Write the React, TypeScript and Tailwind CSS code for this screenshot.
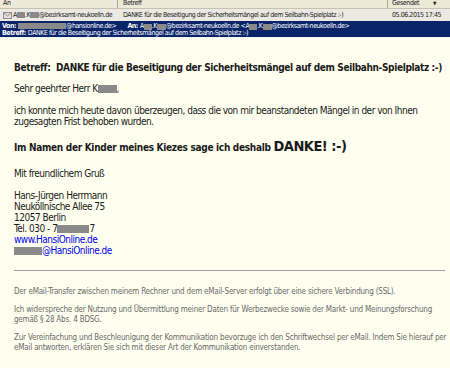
const font = "font-['Tahoma','DejaVu_Sans_Condensed','DejaVu_Sans',sans-serif]";

function Redact({ w, h = 8 }: { w: number; h?: number }) {
  return <span className="inline-block bg-[#8a8a8a] align-[-1px]" style={{ width: w, height: h }} />;
}

function Envelope() {
  return (
    <svg width="9" height="7" viewBox="0 0 9 7" className="shrink-0">
      <rect x="0.5" y="0.5" width="8" height="6" fill="#e4e2da" stroke="#8c8c8c" />
      <path d="M0.5 0.5 L4.5 4 L8.5 0.5" fill="none" stroke="#8c8c8c" />
    </svg>
  );
}

export default function App() {
  return (
    <div className={`${font} w-[450px] h-[368px] bg-[#ffffef] overflow-hidden flex flex-col`}>
      {/* column headers */}
      <div className="h-[9px] shrink-0 flex bg-[#ece9d8] border-b border-[#c5c2b2] text-[7px] leading-[7px] text-[#222] overflow-hidden tracking-[-0.4px] whitespace-nowrap">
        <div className="w-[118px] pl-[3px] border-r border-[#aca899]">An</div>
        <div className="w-[270px] pl-[5px] border-r border-[#aca899]">Betreff</div>
        <div className="flex-1 pl-[4px] flex justify-between pr-[14px]">
          <span>Gesendet</span>
          <span className="text-[5px]">▼</span>
        </div>
      </div>
      {/* message row */}
      <div className="h-[12px] shrink-0 flex items-center bg-[#ebe9e2] text-[7px] leading-[8px] text-[#222] tracking-[-0.45px] whitespace-nowrap">
        <div className="w-[118px] flex items-center pl-[3px] overflow-hidden">
          <Envelope />
          <span className="ml-[1px]">A</span><Redact w={8} h={6} /><span>.K</span><Redact w={9} h={6} /><span>@bezirksamt-neukoelln.de</span>
        </div>
        <div className="w-[270px] pl-[5px] overflow-hidden">DANKE für die Beseitigung der Sicherheitsmängel auf dem Seilbahn-Spielplatz :-)</div>
        <div className="flex-1 pl-[4px]">05.06.2015 17:45</div>
      </div>
      {/* preview header */}
      <div className="h-[16px] shrink-0 bg-[#0a246a] text-white text-[7px] leading-[7px] tracking-[-0.45px] whitespace-nowrap px-[2px] pt-[2px] flex flex-col">
        <div className="flex items-center h-[7px]">
          <b>Von:</b>
          <span className="ml-[2px]"><Redact w={48} h={6} /></span>
          <span>@hansionline.de&gt;</span>
          <b className="ml-[11px]">An:</b>
          <span className="ml-[2px]">A</span><Redact w={8} h={6} /><span>.K</span><Redact w={9} h={6} />
          <span>@bezirksamt-neukoelln.de &lt;A</span><Redact w={8} h={6} /><span>.K</span><Redact w={9} h={6} />
          <span>@bezirksamt-neukoelln.de&gt;</span>
        </div>
        <div className="flex items-center h-[7px]">
          <b>Betreff:</b>
          <span className="ml-[2px]">DANKE für die Beseitigung der Sicherheitsmängel auf dem Seilbahn-Spielplatz :-)</span>
        </div>
      </div>
      <div className="h-[1px] shrink-0 bg-[#f4f4f0]" />
      {/* body */}
      <div className="pl-[14px] pr-[5px] pt-[24px] text-[10px] leading-[11px] text-[#1a1a1a] tracking-[-0.5px] flex flex-col whitespace-nowrap">
        <p className="font-bold tracking-[-0.35px]">Betreff:&nbsp; DANKE für die Beseitigung der Sicherheitsmängel auf dem Seilbahn-Spielplatz :-)</p>
        <p className="mt-[10px]">Sehr geehrter Herr K<Redact w={19} />,</p>
        <p className="mt-[11px]">ich konnte mich heute davon überzeugen, dass die von mir beanstandeten Mängel in der von Ihnen<br />zugesagten Frist behoben wurden.</p>
        <p className="mt-[10px] font-bold tracking-[-0.3px] leading-[18px]">
          Im Namen der Kinder meines Kiezes sage ich deshalb <span className="text-[14.5px] tracking-[-0.5px]">DANKE! :-)</span>
        </p>
        <p className="mt-[11px]">Mit freundlichem Gruß</p>
        <p className="mt-[11px]">
          Hans-Jürgen Herrmann<br />
          Neuköllnische Allee 75<br />
          12057 Berlin<br />
          Tel. 030 - 7<Redact w={32} />7<br />
          <span className="text-[#0000ee]">www.HansiOnline.de</span><br />
          <Redact w={28} /><span className="text-[#0000ee]">@HansiOnline.de</span>
        </p>
        <div className="mt-[14px] h-[1px] bg-[#a0a0a0]" />
        <div className="mt-[16px] text-[8px] leading-[10px] text-[#6a6a6a] tracking-[-0.2px] flex flex-col gap-[8px]">
          <p>Der eMail-Transfer zwischen meinem Rechner und dem eMail-Server erfolgt über eine sichere Verbindung (SSL).</p>
          <p>Ich widerspreche der Nutzung und Übermittlung meiner Daten für Werbezwecke sowie der Markt- und Meinungsforschung<br />gemäß § 28 Abs. 4 BDSG.</p>
          <p>Zur Vereinfachung und Beschleunigung der Kommunikation bevorzuge ich den Schriftwechsel per eMail. Indem Sie hierauf per<br />eMail antworten, erklären Sie sich mit dieser Art der Kommunikation einverstanden.</p>
        </div>
      </div>
    </div>
  );
}
